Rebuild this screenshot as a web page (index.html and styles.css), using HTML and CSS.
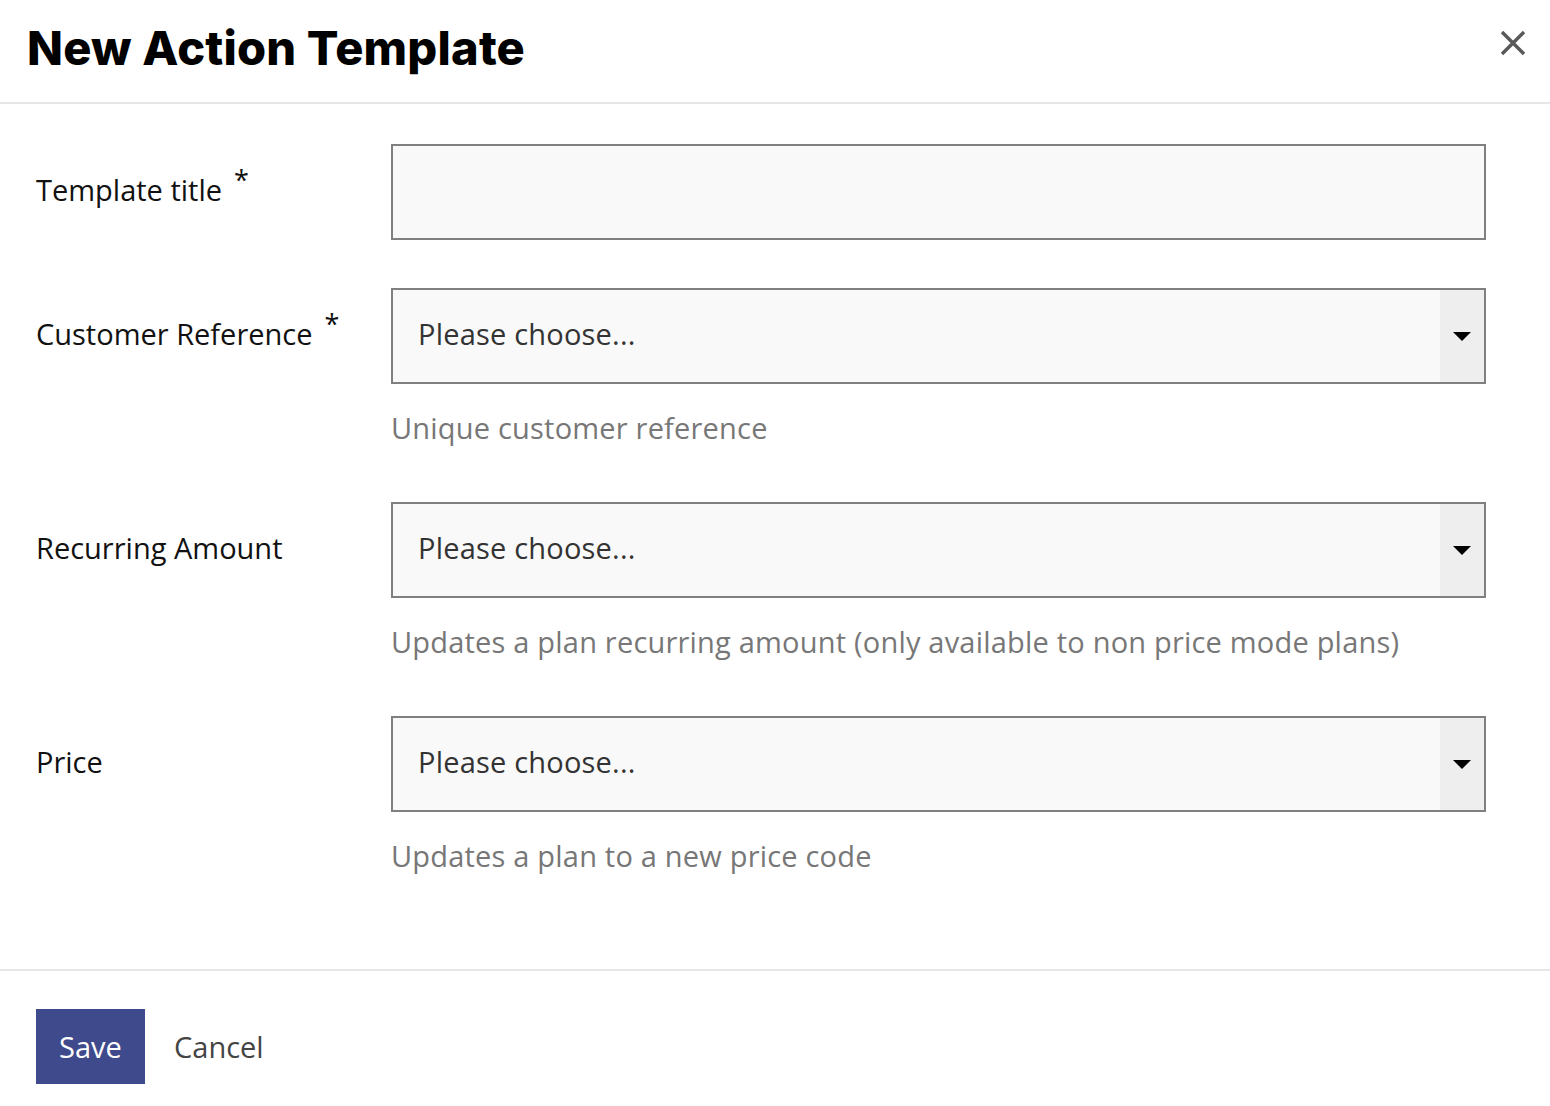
FILE: index.html
```html
<!DOCTYPE html>
<html>
<head>
<meta charset="utf-8">
<link rel="stylesheet" href="styles.css">
</head>
<body>
<div class="modal">
  <header class="modal-header">
    <h1 class="title">New Action Template</h1>
    <button class="close" aria-label="Close">
      <svg width="26" height="26" viewBox="0 0 26 26"><path d="M2 2 L24 24 M24 2 L2 24" stroke="#595959" stroke-width="3.4" fill="none"/></svg>
    </button>
  </header>
  <main class="modal-body">
    <div class="row">
      <label class="label">Template title<span class="req">*</span></label>
      <div class="field">
        <div class="input"></div>
      </div>
    </div>
    <div class="row">
      <label class="label">Customer Reference<span class="req">*</span></label>
      <div class="field">
        <div class="select"><span class="placeholder">Please choose...</span><span class="arrow"></span></div>
        <p class="help">Unique customer reference</p>
      </div>
    </div>
    <div class="row">
      <label class="label">Recurring Amount</label>
      <div class="field">
        <div class="select"><span class="placeholder">Please choose...</span><span class="arrow"></span></div>
        <p class="help">Updates a plan recurring amount (only available to non price mode plans)</p>
      </div>
    </div>
    <div class="row">
      <label class="label">Price</label>
      <div class="field">
        <div class="select"><span class="placeholder">Please choose...</span><span class="arrow"></span></div>
        <p class="help">Updates a plan to a new price code</p>
      </div>
    </div>
  </main>
  <footer class="modal-footer">
    <button class="btn-save">Save</button>
    <button class="btn-cancel">Cancel</button>
  </footer>
</div>
</body>
</html>
```
FILE: styles.css
```css
html, body {
  margin: 0;
  padding: 0;
  background: #ffffff;
}
body {
  font-family: "Open Sans", "Lato", sans-serif;
  color: #1a1a1a;
}
.modal {
  width: 1550px;
  min-height: 1106px;
}
.modal-header {
  height: 102px;
  border-bottom: 2px solid #e6e6e6;
  display: flex;
  align-items: center;
  justify-content: space-between;
  padding: 0 24px 0 27px;
  box-sizing: content-box;
}
.title {
  margin: 0;
  font-family: "Inter", sans-serif;
  font-weight: 800;
  font-size: 47px;
  letter-spacing: 0.2px;
  color: #000;
  padding-bottom: 8px;
}
.close {
  border: none;
  background: none;
  padding: 0;
  width: 26px;
  height: 26px;
  margin-bottom: 16px;
  cursor: pointer;
}
.modal-body {
  padding: 40px 64px 87px 36px;
  display: flex;
  flex-direction: column;
  gap: 48px;
}
.row {
  display: flex;
  align-items: flex-start;
}
.label {
  width: 355px;
  flex: none;
  font-size: 29px;
  line-height: 34px;
  padding-top: 29px;
  color: #111;
  display: flex;
  align-items: flex-start;
}
.req {
  font-size: 27px;
  line-height: 1;
  position: relative;
  top: -7px;
  margin-left: 12px;
}
.field {
  flex: 1;
}
.input, .select {
  height: 96px;
  box-sizing: border-box;
  border: 2px solid #808080;
  background: #f9f9f9;
}
.select {
  display: flex;
  align-items: center;
}
.placeholder {
  flex: 1;
  padding-left: 25px;
  font-size: 29px;
  line-height: 34px;
  letter-spacing: 0.2px;
  color: #333;
  margin-top: -4px;
}
.arrow {
  width: 44px;
  height: 100%;
  background: #eeeeee;
  display: flex;
  align-items: center;
  justify-content: center;
}
.arrow::after {
  content: "";
  width: 0;
  height: 0;
  border-left: 9px solid transparent;
  border-right: 9px solid transparent;
  border-top: 9px solid #000;
}
.help {
  margin: 27px 0 9px;
  font-size: 29px;
  line-height: 34px;
  letter-spacing: 0.2px;
  color: #777;
}
.modal-footer {
  border-top: 2px solid #e6e6e6;
  padding: 38px 36px;
  display: flex;
  align-items: center;
  gap: 29px;
}
.btn-save {
  width: 109px;
  height: 75px;
  border: none;
  background: #3f4a8c;
  color: #fff;
  font-family: "Open Sans", sans-serif;
  font-size: 29px;
  cursor: pointer;
}
.btn-cancel {
  border: none;
  background: none;
  padding: 0;
  font-family: "Open Sans", sans-serif;
  font-size: 29px;
  color: #444;
  cursor: pointer;
}
```
